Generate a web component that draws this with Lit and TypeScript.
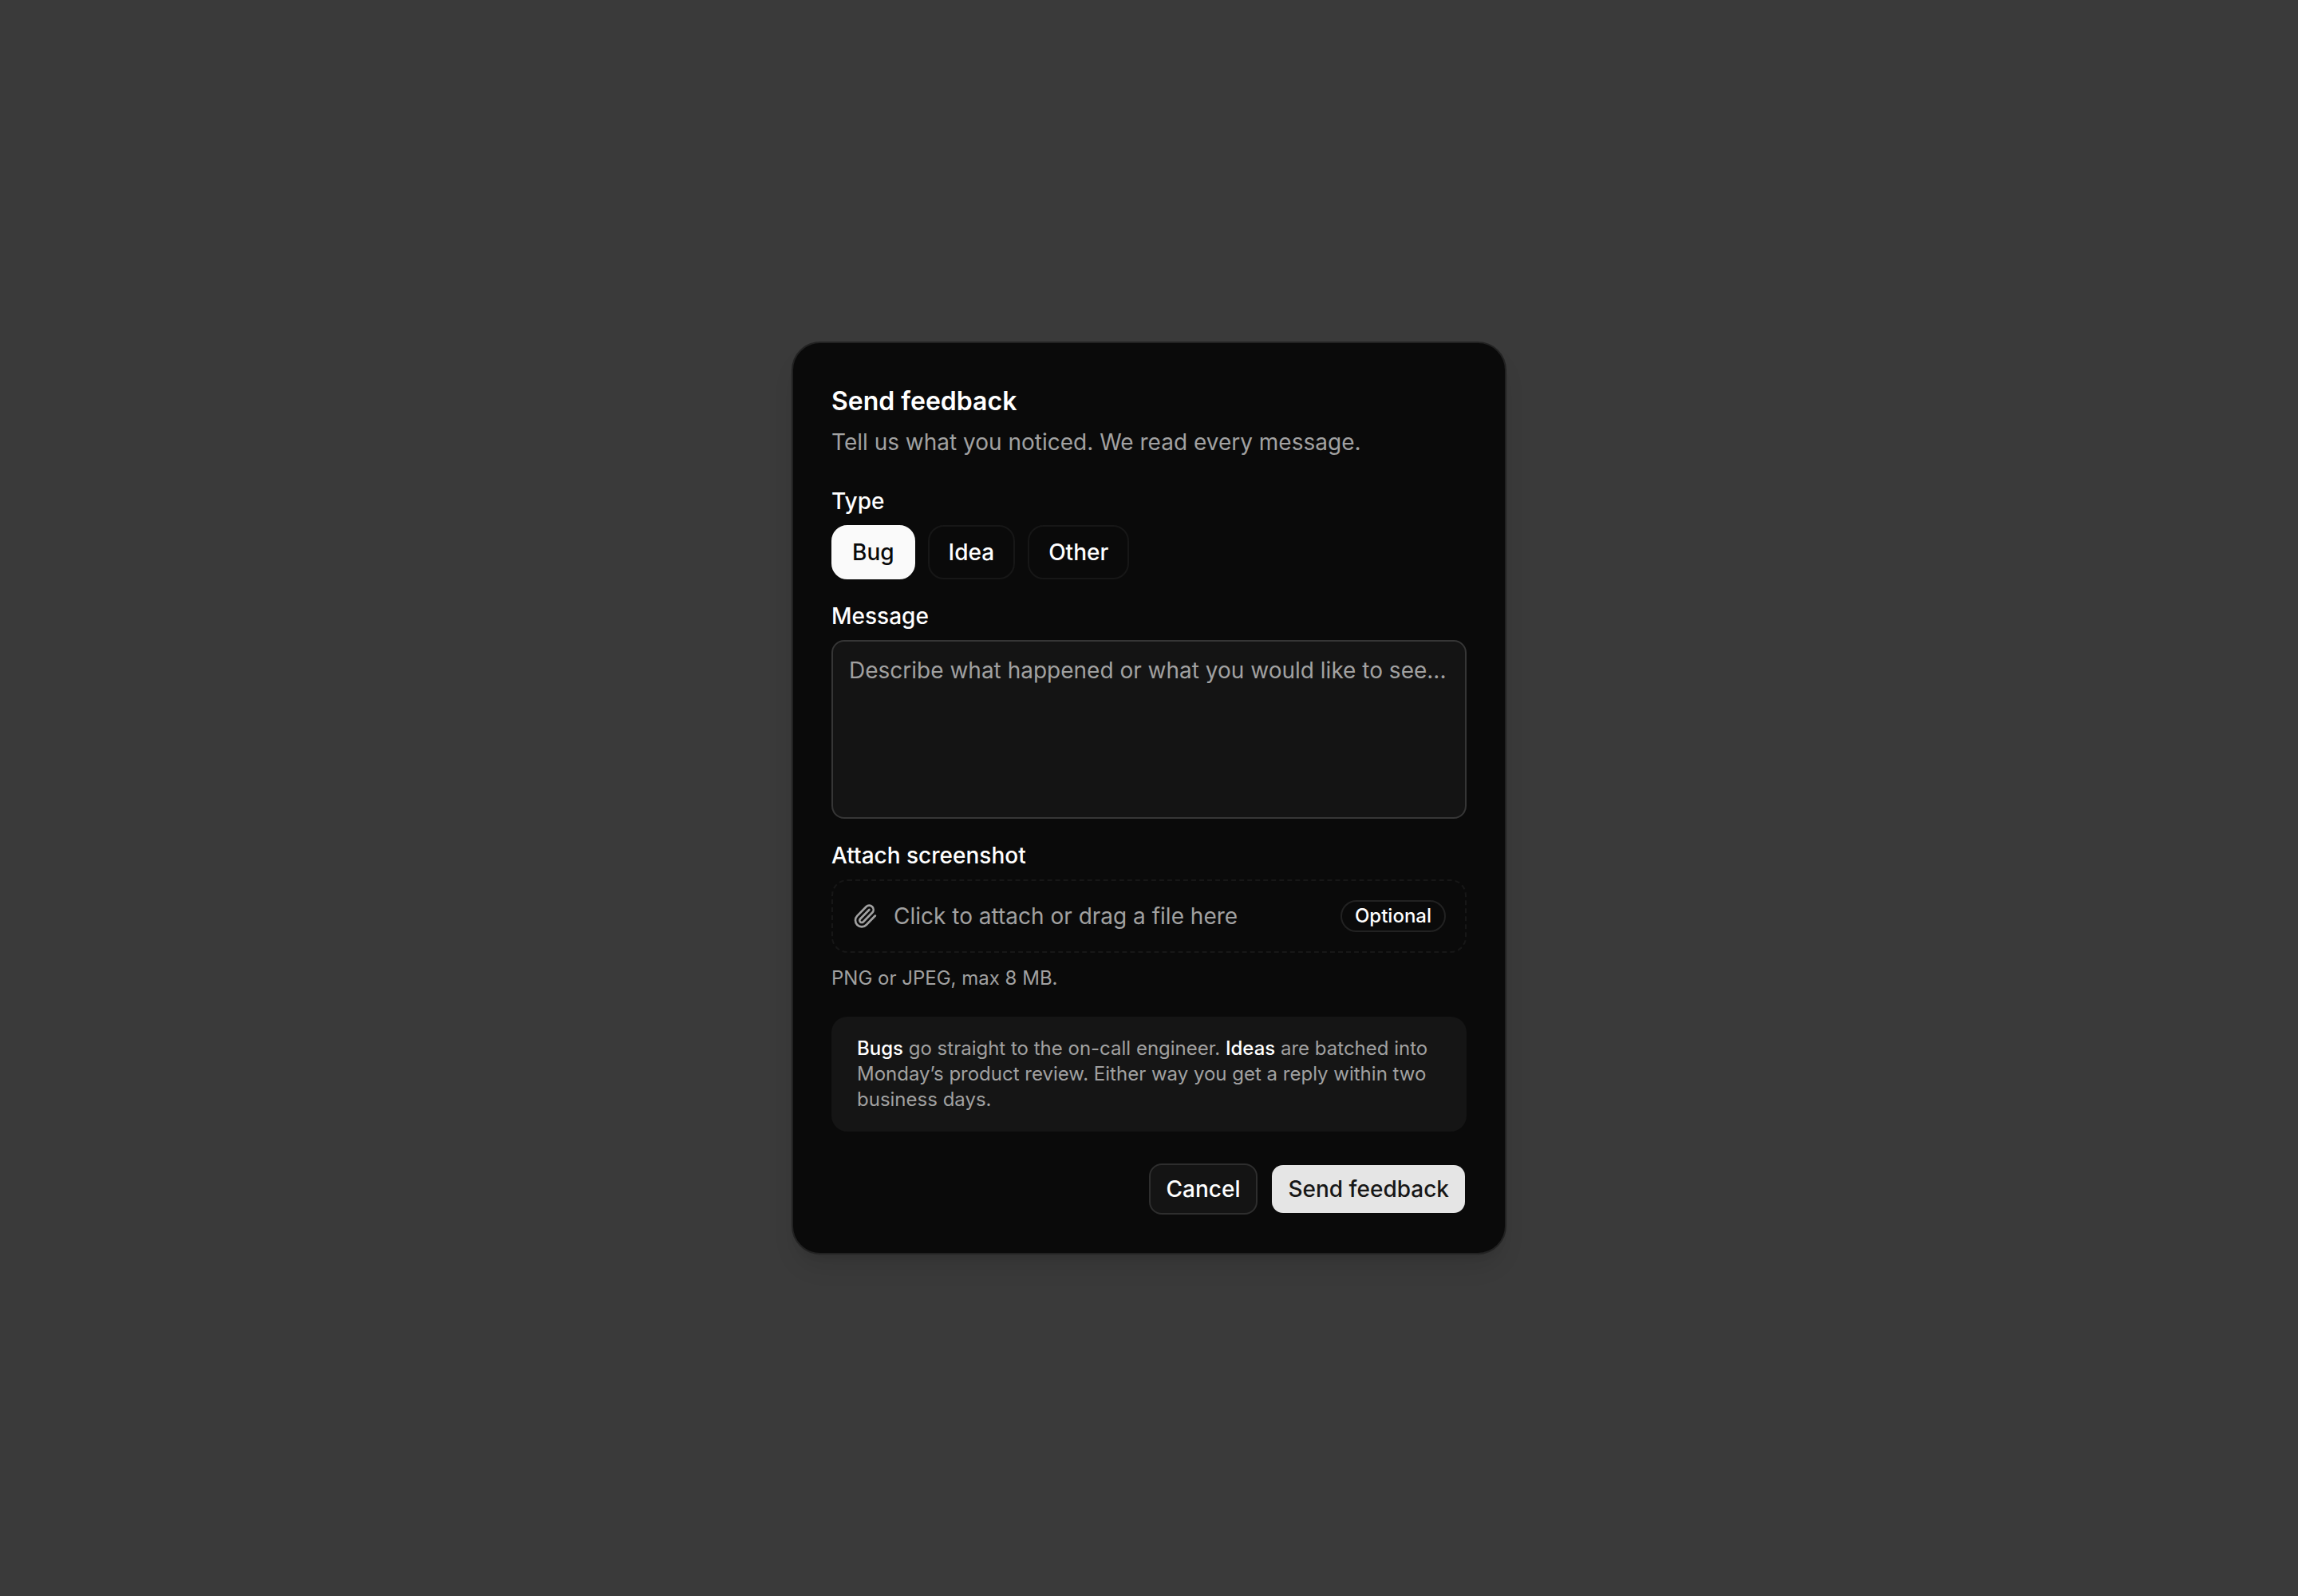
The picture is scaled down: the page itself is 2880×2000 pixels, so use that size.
import { LitElement, html, css } from "lit";
import { customElement, state } from "lit/decorators.js";
import { classMap } from "lit/directives/class-map.js";

const TYPES = ["Bug", "Idea", "Other"];

@customElement("app-root")
export class AppRoot extends LitElement {
  static styles = css`
    :host {
      --surface: #0a0a0a;
      --foreground: #ffffff;
      --selected: #fafafa;
      --muted: #a1a1a1;
      --hairline: #171717;
      --fill: #151515;
      display: flex;
      align-items: center;
      justify-content: center;
      box-sizing: border-box;
      min-height: 100vh;
      padding: 32px;
      background: #3a3a3a;
      color: var(--foreground);
      font-family: Inter, "Liberation Sans", sans-serif;
      font-size: 28px;
      line-height: 40px;
    }
    *,
    *::before,
    *::after {
      box-sizing: border-box;
    }
    h2,
    p {
      margin: 0;
    }
    button,
    textarea {
      margin: 0;
      font: inherit;
      color: inherit;
    }
    button {
      cursor: pointer;
      font-weight: 500;
      white-space: nowrap;
    }
    .card {
      display: flex;
      flex-direction: column;
      gap: 40px;
      width: 100%;
      max-width: 896px;
      padding: 48px;
      border: 2px solid #222222;
      border-radius: 36px;
      background: var(--surface);
      box-shadow:
        0 20px 30px -6px rgba(0, 0, 0, 0.1),
        0 8px 12px -8px rgba(0, 0, 0, 0.1);
    }
    .header {
      display: flex;
      flex-direction: column;
      gap: 6px;
    }
    .title {
      font-size: 32px;
      line-height: 50px;
      font-weight: 600;
    }
    .muted {
      color: var(--muted);
    }
    .fields {
      display: flex;
      flex-direction: column;
      gap: 32px;
    }
    .field {
      display: flex;
      flex-direction: column;
      gap: 16px;
    }
    .label {
      font-weight: 500;
      line-height: 28px;
    }
    .types {
      display: flex;
      flex-wrap: wrap;
      gap: 16px;
    }
    .type {
      height: 68px;
      padding: 0 24px;
      border: 2px solid var(--hairline);
      border-radius: 20px;
      background: transparent;
    }
    .type.selected {
      border-color: var(--selected);
      background: var(--selected);
      color: var(--surface);
    }
    .message {
      display: block;
      width: 100%;
      height: 224px;
      padding: 16px 20px;
      border: 2px solid #363636;
      border-radius: 16px;
      background: #141414;
      resize: none;
      outline: none;
    }
    .message::placeholder {
      color: var(--muted);
      opacity: 1;
    }
    .drop {
      display: flex;
      align-items: center;
      gap: 20px;
      height: 92px;
      padding: 0 24px;
      border: 2px dashed var(--hairline);
      border-radius: 20px;
      color: var(--muted);
      cursor: pointer;
    }
    .file {
      position: absolute;
      width: 1px;
      height: 1px;
      opacity: 0;
      pointer-events: none;
    }
    .icon {
      flex: none;
      width: 32px;
      height: 32px;
    }
    .prompt {
      flex: 1;
    }
    .badge {
      padding: 0 16px;
      border: 2px solid #222222;
      border-radius: 20px;
      color: var(--foreground);
      font-size: 24px;
      line-height: 36px;
      font-weight: 500;
    }
    .small {
      font-size: 24px;
      line-height: 32px;
    }
    .note {
      padding: 24px 32px;
      border-radius: 20px;
      background: var(--fill);
    }
    .strong {
      color: var(--foreground);
      font-weight: 500;
    }
    .footer {
      display: flex;
      justify-content: flex-end;
      gap: 16px;
    }
    .action {
      height: 64px;
      padding: 0 20px;
      border: 2px solid #2e2e2e;
      border-radius: 16px;
      background: #141414;
    }
    .action.primary {
      border-color: transparent;
      background: #e5e5e5 padding-box;
      color: #171717;
    }
  `;

  @state() private selected = "Bug";

  render() {
    return html`
      <form class="card" @submit=${(e: Event) => e.preventDefault()}>
        <div class="header">
          <h2 class="title">Send feedback</h2>
          <p class="muted">Tell us what you noticed. We read every message.</p>
        </div>
        <div class="fields">
          <div class="field">
            <span class="label" id="type-label">Type</span>
            <div class="types" role="group" aria-labelledby="type-label">
              ${TYPES.map(
                (t) => html`<button
                  type="button"
                  class=${classMap({ type: true, selected: t === this.selected })}
                  aria-pressed=${t === this.selected ? "true" : "false"}
                  @click=${() => (this.selected = t)}
                >${t}</button>`
              )}
            </div>
          </div>
          <div class="field">
            <label class="label" for="message">Message</label>
            <textarea
              class="message"
              id="message"
              placeholder="Describe what happened or what you would like to see..."
            ></textarea>
          </div>
          <div class="field">
            <label class="label" for="file">Attach screenshot</label>
            <label class="drop">
              <input class="file" id="file" type="file" accept="image/png,image/jpeg" />
              <svg
                class="icon"
                viewBox="0 0 24 24"
                fill="none"
                stroke="currentColor"
                stroke-width="2"
                stroke-linecap="round"
                stroke-linejoin="round"
                aria-hidden="true"
              >
                <path
                  d="m16 6-8.414 8.586a2 2 0 0 0 2.829 2.829l8.414-8.586a4 4 0 1 0-5.657-5.657l-8.379 8.551a6 6 0 1 0 8.485 8.485l8.379-8.551"
                />
              </svg>
              <span class="prompt">Click to attach or drag a file here</span>
              <span class="badge">Optional</span>
            </label>
            <p class="small muted">PNG or JPEG, max 8 MB.</p>
          </div>
          <p class="note small muted">
            <span class="strong">Bugs</span> go straight to the on-call engineer.
            <span class="strong">Ideas</span> are batched into Monday’s product review. Either way
            you get a reply within two business days.
          </p>
        </div>
        <div class="footer">
          <button type="button" class="action">Cancel</button>
          <button type="submit" class="action primary">Send feedback</button>
        </div>
      </form>
    `;
  }
}
